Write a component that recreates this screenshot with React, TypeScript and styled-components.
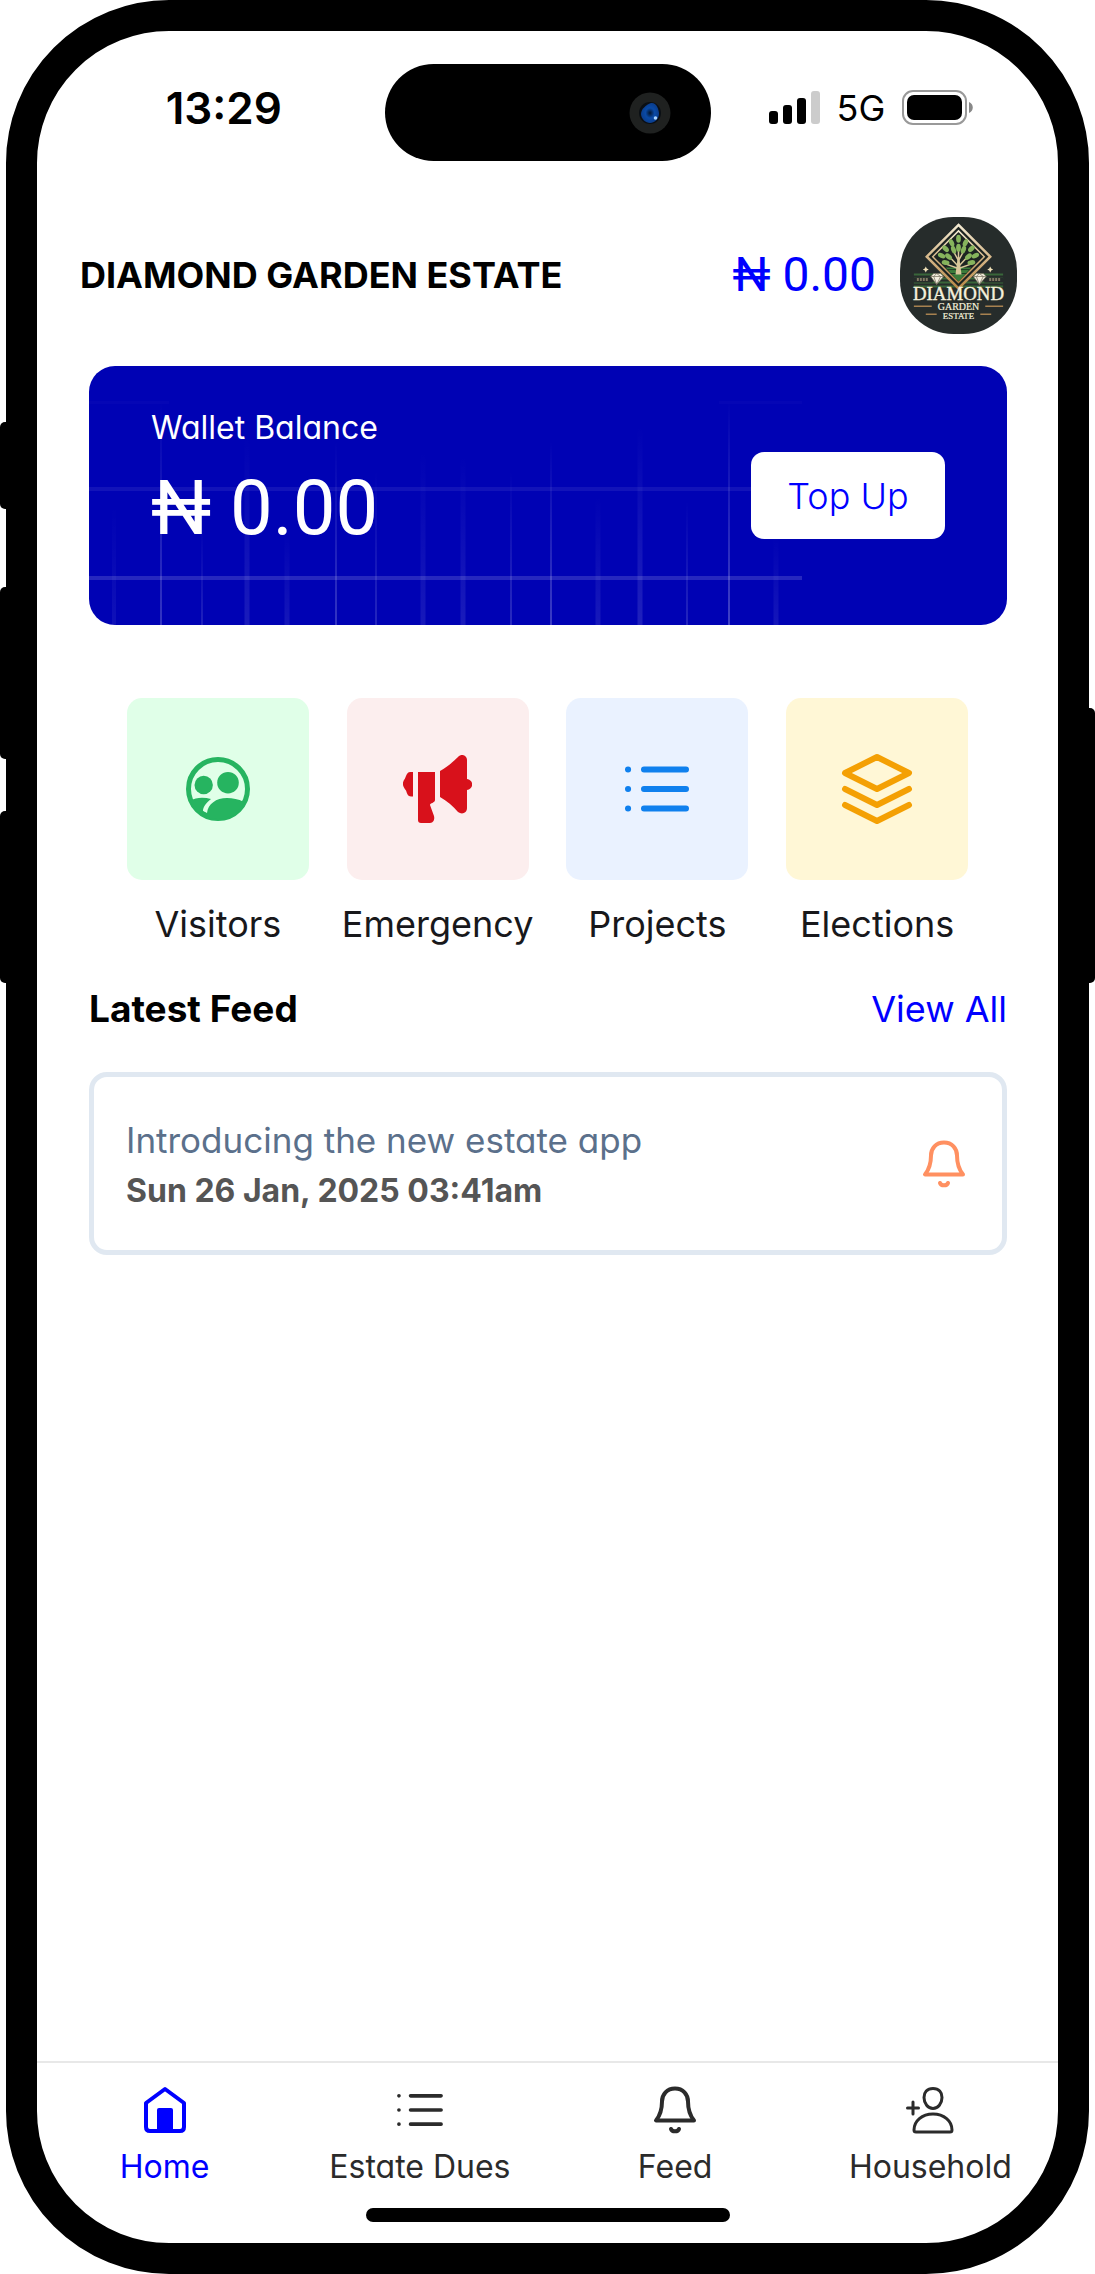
import React from 'react';
import styled, { createGlobalStyle, css } from 'styled-components';

const sans = `Inter, "Noto Sans", "Liberation Sans", sans-serif`;

// Inter with its single-storey "a"
const rounded = css`
  font-family: ${sans};
  font-feature-settings: "cv11" 1;
`;

const GlobalStyle = createGlobalStyle`
  *, *::before, *::after { box-sizing: border-box; }
  body { margin: 0; background: #fff; font-family: ${sans}; color: #000; }
  button { font: inherit; border: 0; padding: 0; background: none; cursor: pointer; }
  a { color: inherit; text-decoration: none; }
  h1, h2, p, ul { margin: 0; padding: 0; }
  ul { list-style: none; }
  svg { display: block; }
`;

const Device = styled.div`
  position: relative;
  padding: 0 6px;
`;

const SideKey = styled.span<{ $top: number; $height: number; $side: 'left' | 'right' }>`
  position: absolute;
  top: ${(p) => p.$top}px;
  height: ${(p) => p.$height}px;
  width: 12px;
  border-radius: 5px;
  background: #000;
  ${(p) => (p.$side === 'left' ? css`left: 0;` : css`right: 0;`)}
`;

const Screen = styled.div`
  position: relative;
  display: flex;
  flex-direction: column;
  min-height: 100vh;
  border: 31px solid #000;
  border-radius: 163px;
  background: #fff;
`;

const StatusBar = styled.div`
  display: grid;
  grid-template-columns: 1fr 326px 1fr;
  align-items: center;
  padding-top: 33px;
`;

const Clock = styled.time`
  font-size: 44px;
  line-height: 48px;
  font-weight: 600;
  padding-left: 26px;
  padding-bottom: 10px;
  text-align: center;
`;

const Island = styled.div`
  display: flex;
  align-items: center;
  justify-content: flex-end;
  height: 97px;
  padding-right: 40px;
  border-radius: 49px;
  background: #000;
`;

const StatusIcons = styled.div`
  display: flex;
  align-items: center;
  gap: 17px;
  padding: 0 0 10px 58px;
  font-size: 36px;
  line-height: 40px;
  font-weight: 400;
`;

const Header = styled.header`
  display: flex;
  align-items: center;
  gap: 24px;
  padding: 56px 41px 0 43px;
`;

const EstateName = styled.h1`
  flex: 1;
  padding-bottom: 2px;
  font-size: 36px;
  line-height: 44px;
  font-weight: 700;
`;

const HeaderBalance = styled.span`
  padding-bottom: 2px;
  font-family: Roboto, "Noto Sans", sans-serif;
  font-size: 48px;
  line-height: 56px;
  font-weight: 400;
  color: #0000ff;
`;

const Main = styled.main`
  flex: 1;
  padding: 32px 51px 0 52px;
`;

const Wallet = styled.section`
  position: relative;
  display: flex;
  align-items: center;
  justify-content: space-between;
  height: 259px;
  padding: 0 62px;
  border-radius: 26px;
  background: #0002b4;
  color: #fff;
  overflow: hidden;
`;

const WalletGrid = styled.svg`
  position: absolute;
  inset: 0;
`;

const WalletText = styled.div`
  position: relative;
  display: grid;
  gap: 4px;
  padding-bottom: 20px;
`;

const WalletLabel = styled.p`
  ${rounded}
  font-size: 32px;
  line-height: 40px;
`;

const WalletAmount = styled.p`
  font-family: Roboto, "Noto Sans", sans-serif;
  font-size: 76px;
  line-height: 112px;
  font-weight: 400;
`;

const TopUp = styled.button`
  position: relative;
  width: 194px;
  height: 87px;
  border-radius: 13px;
  background: #fff;
  color: #0000ff;
  font-size: 36px;
  font-weight: 300;
`;

const Shortcuts = styled.nav`
  display: grid;
  grid-template-columns: repeat(4, 1fr);
  padding: 73px 20px 0 19px;
`;

const Shortcut = styled.a`
  display: flex;
  flex-direction: column;
  align-items: center;
  gap: 20px;
  ${rounded}
  font-size: 36px;
  line-height: 48px;
  font-weight: 400;
  color: #18181b;
`;

const Tile = styled.span<{ $tint: string; $ink: string }>`
  display: flex;
  align-items: center;
  justify-content: center;
  width: 182px;
  height: 182px;
  border-radius: 15px;
  background: ${(p) => p.$tint};
  color: ${(p) => p.$ink};
`;

const FeedHead = styled.div`
  display: flex;
  align-items: center;
  justify-content: space-between;
  padding-top: 37px;
`;

const FeedTitle = styled.h2`
  font-size: 37px;
  line-height: 48px;
  font-weight: 700;
`;

const ViewAll = styled.a`
  ${rounded}
  font-size: 36px;
  line-height: 48px;
  font-weight: 400;
  color: #0000ff;
`;

const FeedCard = styled.article`
  display: flex;
  align-items: center;
  justify-content: space-between;
  height: 183px;
  margin-top: 39px;
  padding: 0 34px 0 32px;
  border: 5px solid #e0e8f1;
  border-radius: 18px;
`;

const FeedBody = styled.div`
  display: grid;
  gap: 3px;
  padding-top: 3px;
`;

const FeedText = styled.p`
  ${rounded}
  font-size: 35px;
  line-height: 48px;
  font-weight: 400;
  color: #5b708b;
`;

const FeedDate = styled.p`
  font-size: 32px;
  line-height: 48px;
  font-weight: 700;
  color: #555;
`;

const FeedBell = styled.span`
  color: #ff9061;
`;

const TabBar = styled.nav`
  padding: 23px 0 21px;
  border-top: 2px solid #e8e8e8;
`;

const Tabs = styled.ul`
  display: grid;
  grid-template-columns: repeat(4, 1fr);
`;

const Tab = styled.a<{ $active?: boolean }>`
  display: flex;
  flex-direction: column;
  align-items: center;
  gap: 13px;
  ${rounded}
  font-size: 32px;
  line-height: 40px;
  font-weight: 400;
  color: ${(p) => (p.$active ? '#0000ff' : '#2b2b2b')};
`;

const HomeIndicator = styled.div`
  width: 364px;
  height: 14px;
  margin: 21px auto 0;
  border-radius: 7px;
  background: #000;
`;

const Camera = () => (
  <svg width="42" height="42" viewBox="0 0 42 42" aria-hidden="true">
    <defs>
      <radialGradient id="lens">
        <stop offset="0" stopColor="#02152f" />
        <stop offset="0.5" stopColor="#0a4aa6" />
        <stop offset="1" stopColor="#0a3d8c" />
      </radialGradient>
    </defs>
    <circle cx="21" cy="21" r="20.500" fill="#1f2120" />
    <circle cx="21" cy="21" r="11" fill="#0b0f14" />
    <path d="M22 11c-5 2-10 6-10 11s5 9 9 9 9-4 9-9-3-12-8-11z" fill="url(#lens)" />
    <circle cx="26.500" cy="26" r="1.800" fill="#a9d4ff" />
  </svg>
);

const Signal = () => (
  <svg width="51" height="33" viewBox="0 0 51 33" aria-hidden="true">
    <rect x="0" y="20" width="9" height="13" rx="3" />
    <rect x="14" y="14" width="9" height="19" rx="3" />
    <rect x="28" y="7" width="9" height="26" rx="3" />
    <rect x="42" y="0" width="9" height="33" rx="3" fill="#ccc" />
  </svg>
);

const Battery = () => (
  <svg width="71" height="35" viewBox="0 0 71 35" aria-hidden="true">
    <rect x="1" y="1" width="63" height="33" rx="10" fill="none" stroke="#999" strokeWidth="2" />
    <rect x="5" y="5" width="55" height="25" rx="7" />
    <path d="M67 12c5 2 5 9 0 11z" fill="#888" />
  </svg>
);

const leaves = [
  [50, 22, 0], [43, 26, -25], [57, 26, 25], [37, 32, -45], [63, 32, 45], [45, 33, -20], [55, 33, 20],
  [33, 39, -65], [67, 39, 65], [40, 40, -50], [60, 40, 50], [37, 46, -80], [63, 46, 80], [50, 31, 0],
];

const EstateLogo = () => (
  <svg width="117" height="117" viewBox="0 0 118 118" role="img" aria-label="Diamond Garden Estate logo">
    <defs>
      <linearGradient id="gold" x1="0" y1="0" x2="0" y2="1">
        <stop offset="0" stopColor="#f3ead2" />
        <stop offset="1" stopColor="#b98745" />
      </linearGradient>
    </defs>
    <rect width="118" height="118" rx="54" fill="#262c2b" />
    <path d="M14 58h90M14 62h90M14 66h90M14 70h90" stroke="#39663a" strokeWidth="2" />
    <path d="M14 61h19v5H14zM85 61h19v5H85z" fill="#262c2b" />
    <path d="M17 63h11M90 63h11" stroke="#837a64" strokeWidth="3" strokeDasharray="2 1" />
    <path d="M59 8l32 32-32 32-32-32z" fill="#1d2422" stroke="url(#gold)" strokeWidth="2.500" />
    <path d="M59 14l26 26-26 26-26-26z" fill="none" stroke="url(#gold)" strokeWidth="1.500" />
    <path d="M46 51h26l-13 14z" fill="#3c7c3a" />
    <path d="M48 53h22M51 57h16" stroke="#1f3a25" strokeWidth="1" />
    <path d="M59 56V32M59 50L48 38M59 50l11-12M59 44l-6-11M59 44l6-11M59 52l-14-5M59 52l14-5" stroke="#d9c79a" strokeWidth="1.500" fill="none" />
    <g transform="translate(9 0)" fill="#86b45c">
      {leaves.map(([x, y, a]) => (
        <ellipse key={`${x}-${y}`} cx={x} cy={y} rx="2.400" ry="4" transform={`rotate(${a} ${x} ${y})`} />
      ))}
    </g>
    <path d="M56 58l2-16h2l2 16z" fill="#d9c79a" />
    <g fill="#f4efdf" stroke="#6f6a59" strokeWidth="0.700">
      <path d="M31 60l3-3h7l3 3-7 8zM31 60h13M37 68l-3-8 3-3 4 3z" />
      <path d="M74 60l3-3h7l3 3-7 8zM74 60h13M80 68l-3-8 3-3 4 3z" />
    </g>
    <path d="M26 50l1 2 2 1-2 1-1 2-1-2-2-1 2-1zM91 50l1 2 2 1-2 1-1 2-1-2-2-1 2-1z" fill="#f1e2b8" />
    <g fill="#f6f1dc" fontFamily="Liberation Serif, serif" textAnchor="middle">
      <text x="59" y="84" fontSize="19" stroke="#f6f1dc" strokeWidth="0.400">DIAMOND</text>
      <text x="59" y="94" fontSize="10" stroke="#f6f1dc" strokeWidth="0.200">GARDEN</text>
      <text x="59" y="103" fontSize="9" stroke="#f6f1dc" strokeWidth="0.200">ESTATE</text>
    </g>
    <path d="M14 90h18M86 90h18M26 98h11M81 98h11" stroke="#a78150" strokeWidth="1.500" />
  </svg>
);

const verticals = [
  [25, 140, 4, 0.06], [72, 35, 2, 0.2], [113, 160, 2, 0.12], [158, 70, 5, 0.1], [198, 165, 5, 0.08],
  [247, 75, 2, 0.2], [287, 105, 2, 0.14], [334, 85, 5, 0.09], [374, 90, 5, 0.1], [422, 105, 2, 0.16],
  [462, 75, 2, 0.23], [509, 130, 5, 0.09], [551, 60, 5, 0.12], [598, 135, 2, 0.14], [640, 35, 2, 0.25], [687, 170, 5, 0.08],
];

const GridLines = () => (
  <WalletGrid width="917" height="259" viewBox="0 0 917 259" aria-hidden="true">
    <defs>
      <linearGradient id="fade" x1="0" y1="0" x2="0" y2="1">
        <stop offset="0" stopColor="#fff" stopOpacity="0" />
        <stop offset="1" stopColor="#fff" />
      </linearGradient>
    </defs>
    {verticals.map(([x, y, w, o]) => (
      <rect key={x} x={x - w / 2} y={y} width={w} height={259 - y} fill="url(#fade)" opacity={o} />
    ))}
    <rect y="35" width="80" height="3" fill="#fff" opacity="0.02" />
    <rect x="630" y="35" width="83" height="3" fill="#fff" opacity="0.02" />
    <rect y="121" width="713" height="4" fill="#fff" opacity="0.07" />
    <rect y="210" width="713" height="4" fill="#fff" opacity="0.15" />
  </WalletGrid>
);

const VisitorsIcon = () => (
  <svg width="64" height="64" viewBox="0 0 64 64" fill="currentColor" aria-hidden="true">
    <circle cx="32" cy="32" r="29.500" fill="none" stroke="currentColor" strokeWidth="5" />
    <circle cx="17.700" cy="28" r="9.200" />
    <circle cx="42" cy="25.700" r="10.800" />
    <path d="M4 44c6-4 14-4 21-2-5 4-8 8-8 12l4 2c1-9 9-15 20-15 6 0 11 1 17 4-5 11-15 17-26 17S9 56 4 44z" />
  </svg>
);

const MegaphoneIcon = () => (
  <svg width="69" height="69" viewBox="0 0 69 69" fill="currentColor" aria-hidden="true">
    <path d="M10 17v24.500H8c-3 0-4-3-5-6-4-5-4-8-1-12C4 18 5 17 8 17z" />
    <path d="M15 17h17v28c0 3-5 3-5 5l4 11c1 4-1 7-4 7h-9c-2 0-3-1-3-3z" />
    <path d="M37 16c7-4 13-9 18-14 4-4 9-1 9 3v19c7 1 7 10 0 11v18c0 5-5 7-9 4-5-6-11-11-18-15z" />
  </svg>
);

const ListIcon = ({ size, stroke }: { size: number; stroke: number }) => (
  <svg width={size} height={size} viewBox="0 0 66 66" fill="none" stroke="currentColor" strokeWidth={stroke} strokeLinecap="round" aria-hidden="true">
    <path d="M20 13.500h42M20 33h42M20 52.500h42M4 13.500h.1M4 33h.1M4 52.500h.1" />
  </svg>
);

const LayersIcon = () => (
  <svg width="72" height="72" viewBox="0 0 72 72" fill="none" stroke="currentColor" strokeWidth="6" strokeLinecap="round" strokeLinejoin="round" aria-hidden="true">
    <path d="M36 4l32 16-32 16L4 20zM4 36l32 16 32-16M4 52l32 16 32-16" />
  </svg>
);

const HomeIcon = () => (
  <svg width="48" height="48" viewBox="0 0 48 48" fill="none" stroke="currentColor" strokeWidth="4" aria-hidden="true">
    <path d="M5 17L24 3l19 14v24q0 4-4 4H9q-4 0-4-4z" strokeLinejoin="round" />
    <rect x="16" y="22" width="16" height="23" rx="2" fill="currentColor" stroke="none" />
  </svg>
);

const BellIcon = () => (
  <svg width="48" height="48" viewBox="0 0 48 48" fill="none" stroke="currentColor" strokeWidth="4" strokeLinecap="round" strokeLinejoin="round" aria-hidden="true">
    <path d="M24 2.500c-8 0-13 6-13 13 0 8-2 14-6 19h38c-4-5-6-11-6-19 0-7-5-13-13-13z" />
    <path d="M20 43c1 3 7 3 8 0" />
  </svg>
);

const AddUserIcon = () => (
  <svg width="48" height="48" viewBox="0 0 48 48" fill="none" stroke="currentColor" strokeWidth="3" strokeLinecap="round" strokeLinejoin="round" aria-hidden="true">
    <path d="M27 2.500c-6 0-9 4-9 9 0 6 4 11 9 11s9-5 9-11c0-5-3-9-9-9z" />
    <path d="M8 44c0-9 8-16 19-16s19 7 19 16q0 2-2 2H10q-2 0-2-2zM7 16v12M1.500 22h11" />
  </svg>
);

const shortcuts = [
  { label: 'Visitors', tint: '#e0ffe8', ink: '#26b460', icon: <VisitorsIcon /> },
  { label: 'Emergency', tint: '#fceeee', ink: '#d8111b', icon: <MegaphoneIcon /> },
  { label: 'Projects', tint: '#eaf2ff', ink: '#0f80ee', icon: <ListIcon size={66} stroke={6} /> },
  { label: 'Elections', tint: '#fff7d6', ink: '#f4a004', icon: <LayersIcon /> },
];

const tabs = [
  { label: 'Home', icon: <HomeIcon /> },
  { label: 'Estate Dues', icon: <ListIcon size={48} stroke={5} /> },
  { label: 'Feed', icon: <BellIcon /> },
  { label: 'Household', icon: <AddUserIcon /> },
];

export default function App() {
  return (
    <Device>
      <GlobalStyle />
      <SideKey $side="left" $top={422} $height={87} />
      <SideKey $side="left" $top={587} $height={172} />
      <SideKey $side="left" $top={811} $height={172} />
      <SideKey $side="right" $top={708} $height={275} />
      <Screen>
        <StatusBar>
          <Clock>13:29</Clock>
          <Island><Camera /></Island>
          <StatusIcons><Signal /><span>5G</span><Battery /></StatusIcons>
        </StatusBar>
        <Header>
          <EstateName>DIAMOND GARDEN ESTATE</EstateName>
          <HeaderBalance>₦ 0.00</HeaderBalance>
          <EstateLogo />
        </Header>
        <Main>
          <Wallet>
            <GridLines />
            <WalletText>
              <WalletLabel>Wallet Balance</WalletLabel>
              <WalletAmount>₦ 0.00</WalletAmount>
            </WalletText>
            <TopUp type="button">Top Up</TopUp>
          </Wallet>
          <Shortcuts aria-label="Shortcuts">
            {shortcuts.map((s) => (
              <Shortcut key={s.label} href="#">
                <Tile $tint={s.tint} $ink={s.ink}>{s.icon}</Tile>
                {s.label}
              </Shortcut>
            ))}
          </Shortcuts>
          <FeedHead>
            <FeedTitle>Latest Feed</FeedTitle>
            <ViewAll href="#">View All</ViewAll>
          </FeedHead>
          <FeedCard>
            <FeedBody>
              <FeedText>Introducing the new estate app</FeedText>
              <FeedDate>Sun 26 Jan, 2025 03:41am</FeedDate>
            </FeedBody>
            <FeedBell><BellIcon /></FeedBell>
          </FeedCard>
        </Main>
        <TabBar aria-label="Main">
          <Tabs>
            {tabs.map((t, i) => (
              <li key={t.label}>
                <Tab href="#" $active={i === 0}>{t.icon}{t.label}</Tab>
              </li>
            ))}
          </Tabs>
          <HomeIndicator />
        </TabBar>
      </Screen>
    </Device>
  );
}
